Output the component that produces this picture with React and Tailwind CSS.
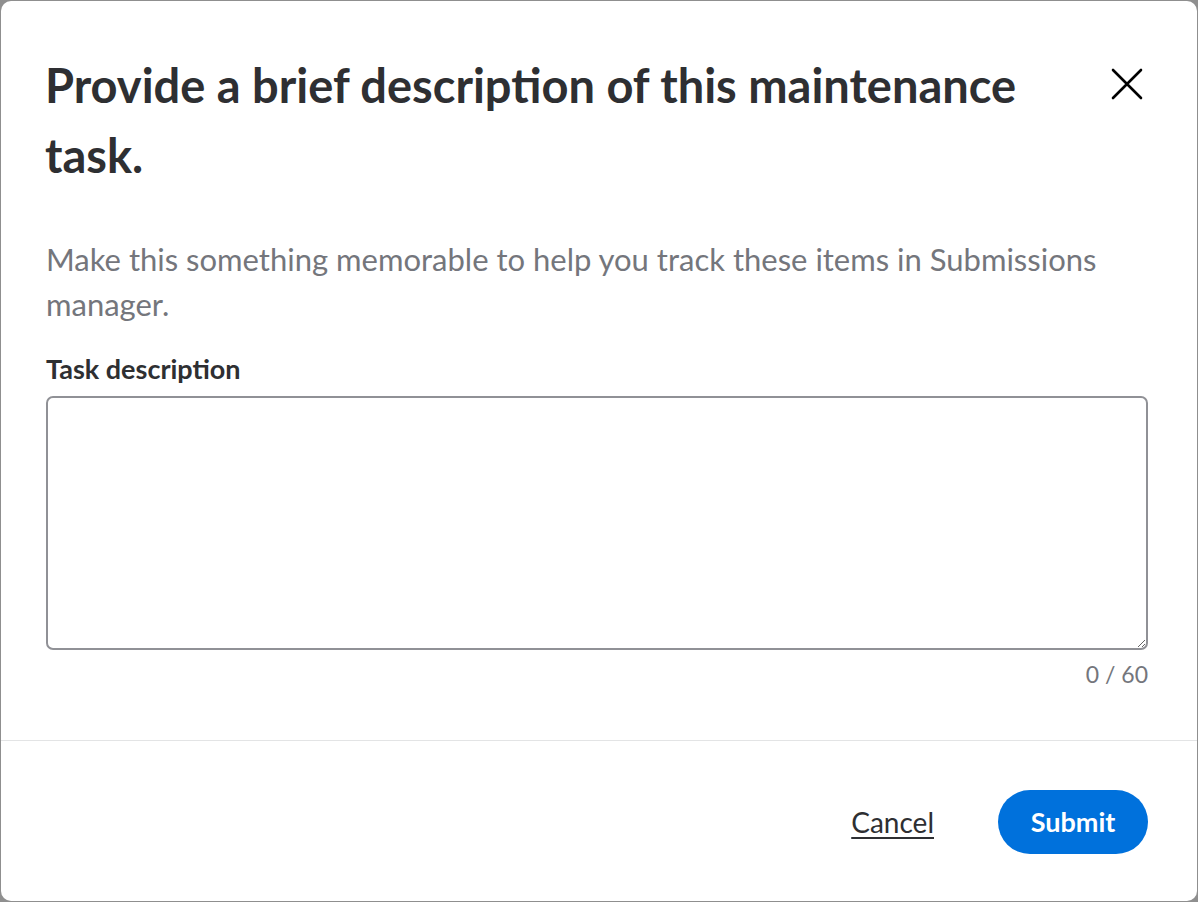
import React, { useState } from 'react';

const CloseIcon = () => (
    <svg width="32" height="32" viewBox="0 0 32 32" fill="none" stroke="#000" strokeWidth="2.6" strokeLinecap="round">
        <path d="M2 2 L30 30 M30 2 L2 30" />
    </svg>
);

export default function App() {
    const [text, setText] = useState('');

    return (
        <div className="h-[902px] w-[1198px] bg-[#8f8f8f] p-px" style={{ fontFamily: 'Lato, "Open Sans", sans-serif' }}>
            <div className="flex h-full flex-col rounded-[10px] bg-white">
                {/* Header */}
                <div className="flex items-start justify-between pl-[44px] pr-[54px] pt-[49px]">
                    <h1 className="text-[47px] font-bold leading-[70px] text-[#2e2f32]">
                        Provide a brief description of this maintenance task.
                    </h1>
                    <button className="mt-[18px] ml-8 shrink-0" aria-label="Close">
                        <CloseIcon />
                    </button>
                </div>

                {/* Body */}
                <div className="flex flex-col pl-[45px] pr-[49px] pt-[47px]">
                    <p className="text-[31px] leading-[45px] text-[#74767c]">
                        Make this something memorable to help you track these items in Submissions manager.
                    </p>
                    <label className="mt-[24px] text-[27px] font-bold leading-[36px] text-[#2e2f32]">
                        Task description
                    </label>
                    <textarea
                        value={text}
                        maxLength={60}
                        onChange={(e) => setText(e.target.value)}
                        className="mt-[9px] h-[254px] w-full rounded-[7px] border-2 border-[#909196] p-3 text-[26px] outline-none"
                    />
                    <div className="mt-[10px] text-right text-[23px] leading-[28px] text-[#74767c]">
                        {text.length} / 60
                    </div>
                </div>

                <div className="mt-[52px] border-t border-[#e3e4e5]" />

                {/* Footer */}
                <div className="flex flex-1 items-center justify-end gap-[64px] pr-[49px] pt-[2px]">
                    <button className="text-[28px] text-[#2e2f32] underline decoration-[1.5px] underline-offset-[4px]">
                        Cancel
                    </button>
                    <button className="h-[64px] w-[150px] rounded-full bg-[#0071dc] text-[27px] font-bold text-white">
                        Submit
                    </button>
                </div>
            </div>
        </div>
    );
}
